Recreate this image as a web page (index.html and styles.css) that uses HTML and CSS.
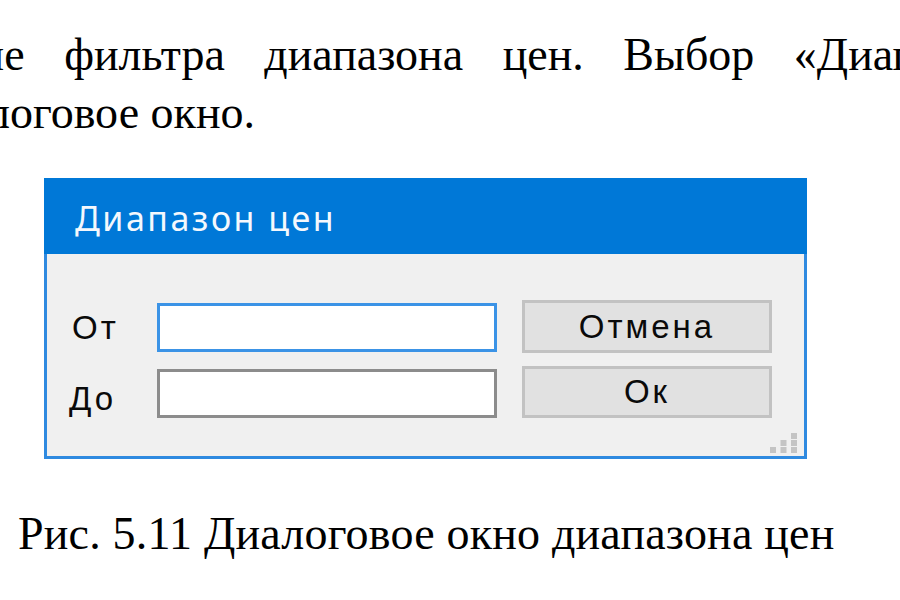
FILE: index.html
```html
<!DOCTYPE html>
<html lang="ru">
<head>
<meta charset="utf-8">
<title>Диапазон цен</title>
<link rel="stylesheet" href="styles.css">
</head>
<body>
<div class="page">
  <p class="line l1"><span class="cut1">ние</span> фильтра диапазона цен. Выбор «Диапазон цен»</p>
  <p class="line l2"><span class="cut2">логовое</span> окно.</p>

  <div class="dialog">
    <div class="titlebar">Диапазон цен</div>
    <div class="client">
      <div class="form">
        <div class="label lab1">От</div>
        <div class="textbox focused"></div>
        <div class="button btn-cancel">Отмена</div>
        <div class="label lab2">До</div>
        <div class="textbox"></div>
        <div class="button btn-ok">Ок</div>
      </div>
      <svg class="grip" width="28" height="20" viewBox="0 0 28 20">
        <rect x="21" y="0" width="6" height="6" fill="#c4c4c4"/>
        <rect x="10.5" y="7" width="6" height="6" fill="#c4c4c4"/>
        <rect x="21" y="7" width="6" height="6" fill="#c4c4c4"/>
        <rect x="0" y="14" width="6" height="6" fill="#c4c4c4"/>
        <rect x="10.5" y="14" width="6" height="6" fill="#c4c4c4"/>
        <rect x="21" y="14" width="6" height="6" fill="#c4c4c4"/>
      </svg>
    </div>
  </div>

  <p class="caption">Рис. 5.11 Диалоговое окно диапазона цен</p>
</div>
</body>
</html>
```
FILE: styles.css
```css
html, body {
  margin: 0;
  padding: 0;
  background: #ffffff;
  overflow: hidden;
}
.page {
  width: 900px;
  height: 600px;
  overflow: hidden;
  padding-top: 26px;
  box-sizing: border-box;
}
.line {
  margin: 0;
  font-family: "Liberation Serif", "Times New Roman", serif;
  font-size: 46px;
  line-height: 58px;
  color: #000;
  white-space: nowrap;
}
.l1 {
  word-spacing: 28px;
  margin-left: -45px;
}
.l2 {
  margin-left: -13px;
}
.dialog {
  margin: 36px 0 0 44px;
  width: 763px;
  height: 281px;
  display: flex;
  flex-direction: column;
  box-sizing: border-box;
}
.titlebar {
  height: 76px;
  flex: none;
  box-sizing: border-box;
  background: #0078d7;
  color: #f4f8fd;
  font-family: "Noto Sans", "Open Sans", sans-serif;
  font-size: 34px;
  line-height: 72px;
  padding: 4px 0 0 31px;
  letter-spacing: 2.5px;
}
.client {
  flex: 1;
  position: relative;
  background: #f0f0f0;
  border: 3px solid #2f8ae0;
  border-top: none;
  padding: 46px 0 0 0;
}
.form {
  display: grid;
  grid-template-columns: 110px 340px 275px;
  grid-template-rows: 53px 52px;
  row-gap: 13px;
}
.label {
  font-family: "Liberation Sans", Arial, sans-serif;
  font-size: 33px;
  color: #0a0a0a;
  padding-left: 25px;
  letter-spacing: 3px;
}
.lab1 { padding-top: 9px; }
.lab2 { padding-top: 14px; padding-left: 22px; }
.textbox {
  margin-top: 3px;
  height: 49px;
  box-sizing: border-box;
  background: #fff;
  border: 3px solid #8c8c8c;
}
.textbox.focused {
  border-color: #3b93e6;
}
.button {
  margin-left: 25px;
  box-sizing: border-box;
  background: #e1e1e1;
  border: 3px solid #c2c2c2;
  font-family: "Liberation Sans", Arial, sans-serif;
  font-size: 33px;
  letter-spacing: 3px;
  color: #0a0a0a;
  text-align: center;
}
.btn-cancel {
  line-height: 47px;
}
.btn-ok {
  line-height: 46px;
}
.grip {
  position: absolute;
  right: 6px;
  bottom: 3px;
}
.caption {
  margin: 46px 0 0 18px;
  font-family: "Liberation Serif", "Times New Roman", serif;
  font-size: 46px;
  line-height: 58px;
  letter-spacing: 0.2px;
  color: #000;
  white-space: nowrap;
}
```
